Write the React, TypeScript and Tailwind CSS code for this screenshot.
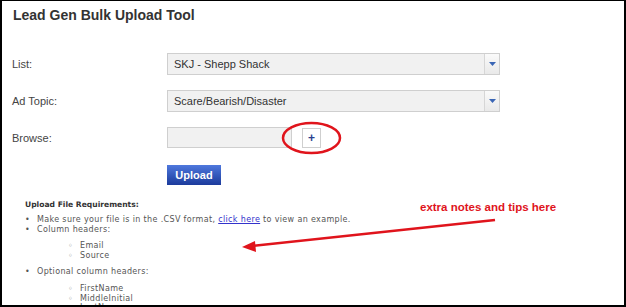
import React from 'react';

const selectOptions = [
  { label: 'List:', value: 'SKJ - Shepp Shack' },
  { label: 'Ad Topic:', value: 'Scare/Bearish/Disaster' },
];

function SelectBox({ value }: { value: string }) {
  return (
    <div className="flex h-[22px] w-[333px] border border-[#cfcfcf] bg-[#f1f1f1]">
      <div className="flex-1 pl-[6px] text-[11px] leading-[20px] text-[#333]">{value}</div>
      <div className="flex w-[15px] items-center justify-center border-l border-[#d6d6d6] bg-gradient-to-b from-[#fafafa] to-[#e9e9e9]">
        <svg width="7" height="4" viewBox="0 0 7 4">
          <polygon points="0,0 7,0 3.5,4" fill="#3a66b5" />
        </svg>
      </div>
    </div>
  );
}

export default function App() {
  return (
    <div className="relative h-[307px] w-[626px] overflow-hidden border-b-2 border-l-2 border-r-2 border-t border-black bg-white font-['Liberation_Sans',Arial,sans-serif]">
      <h1 className="pl-[11px] pt-[6px] text-[14px] font-bold leading-[16px] text-[#333]">Lead Gen Bulk Upload Tool</h1>

      <div className="ml-[10px] mt-[30px] flex flex-col gap-[15px]">
        {selectOptions.map((opt) => (
          <div key={opt.label} className="flex items-center">
            <div className="w-[155px] text-[11px] text-[#444]">{opt.label}</div>
            <SelectBox value={opt.value} />
          </div>
        ))}
        <div className="flex items-center">
          <div className="w-[155px] pt-[2px] text-[11px] text-[#444]">Browse:</div>
          <div className="h-[21px] w-[125px] border border-[#cfcfcf] bg-[#f1f1f1]" />
          <button className="ml-[10px] flex h-[20px] w-[19px] items-center justify-center border border-[#cfcfcf] bg-white text-[12px] font-bold leading-none text-[#2a3f8f]">
            +
          </button>
        </div>
        <div className="flex pl-[155px] pt-[2px]">
          <button className="h-[20px] w-[54px] bg-gradient-to-b from-[#4f78dd] to-[#1c3b9c] text-[11px] font-bold text-white">
            Upload
          </button>
        </div>
      </div>

      <div className="ml-[23px] mt-[15px] font-['DejaVu_Sans',Verdana,sans-serif] text-[8px] tracking-[0.35px] text-[#555]">
        <p className="text-[7.6px] font-bold leading-[10px] tracking-normal text-[#333]">Upload File Requirements:</p>
        <ul className="mt-[5px] leading-[10px]">
          <li className="flex">
            <span className="w-[12px]">•</span>
            <span>
              Make sure your file is in the .CSV format,{' '}
              <a className="text-[#3333cc] underline">click here</a> to view an example.
            </span>
          </li>
          <li className="flex">
            <span className="w-[12px]">•</span>
            <span>Column headers:</span>
          </li>
          <ul className="mb-[7px] ml-[43px] mt-[6px] leading-[9.5px]">
            {['Email', 'Source'].map((h) => (
              <li key={h} className="flex">
                <span className="w-[12px] text-[#777]">◦</span>
                <span>{h}</span>
              </li>
            ))}
          </ul>
          <li className="flex">
            <span className="w-[12px]">•</span>
            <span>Optional column headers:</span>
          </li>
          <ul className="ml-[43px] mt-[7px] leading-[9.5px]">
            {['FirstName', 'MiddleInitial', 'LastName'].map((h) => (
              <li key={h} className="flex">
                <span className="w-[12px] text-[#777]">◦</span>
                <span>{h}</span>
              </li>
            ))}
          </ul>
        </ul>
      </div>

      {/* annotation overlay */}
      <svg className="pointer-events-none absolute -left-[2px] -top-[1px]" width="626" height="307" viewBox="0 0 626 307">
        <ellipse cx="311.5" cy="138" rx="28.5" ry="15" fill="none" stroke="#e0141c" strokeWidth="2.5" />
        <line x1="495" y1="220" x2="252" y2="246" stroke="#e0141c" strokeWidth="2.5" />
        <polygon points="242,247 255,241 256,252" fill="#e0141c" />
      </svg>
      <div className="absolute left-[418px] top-[199px] text-[11.5px] font-bold leading-[14px] text-[#e0141c]">
        extra notes and tips here
      </div>
    </div>
  );
}
